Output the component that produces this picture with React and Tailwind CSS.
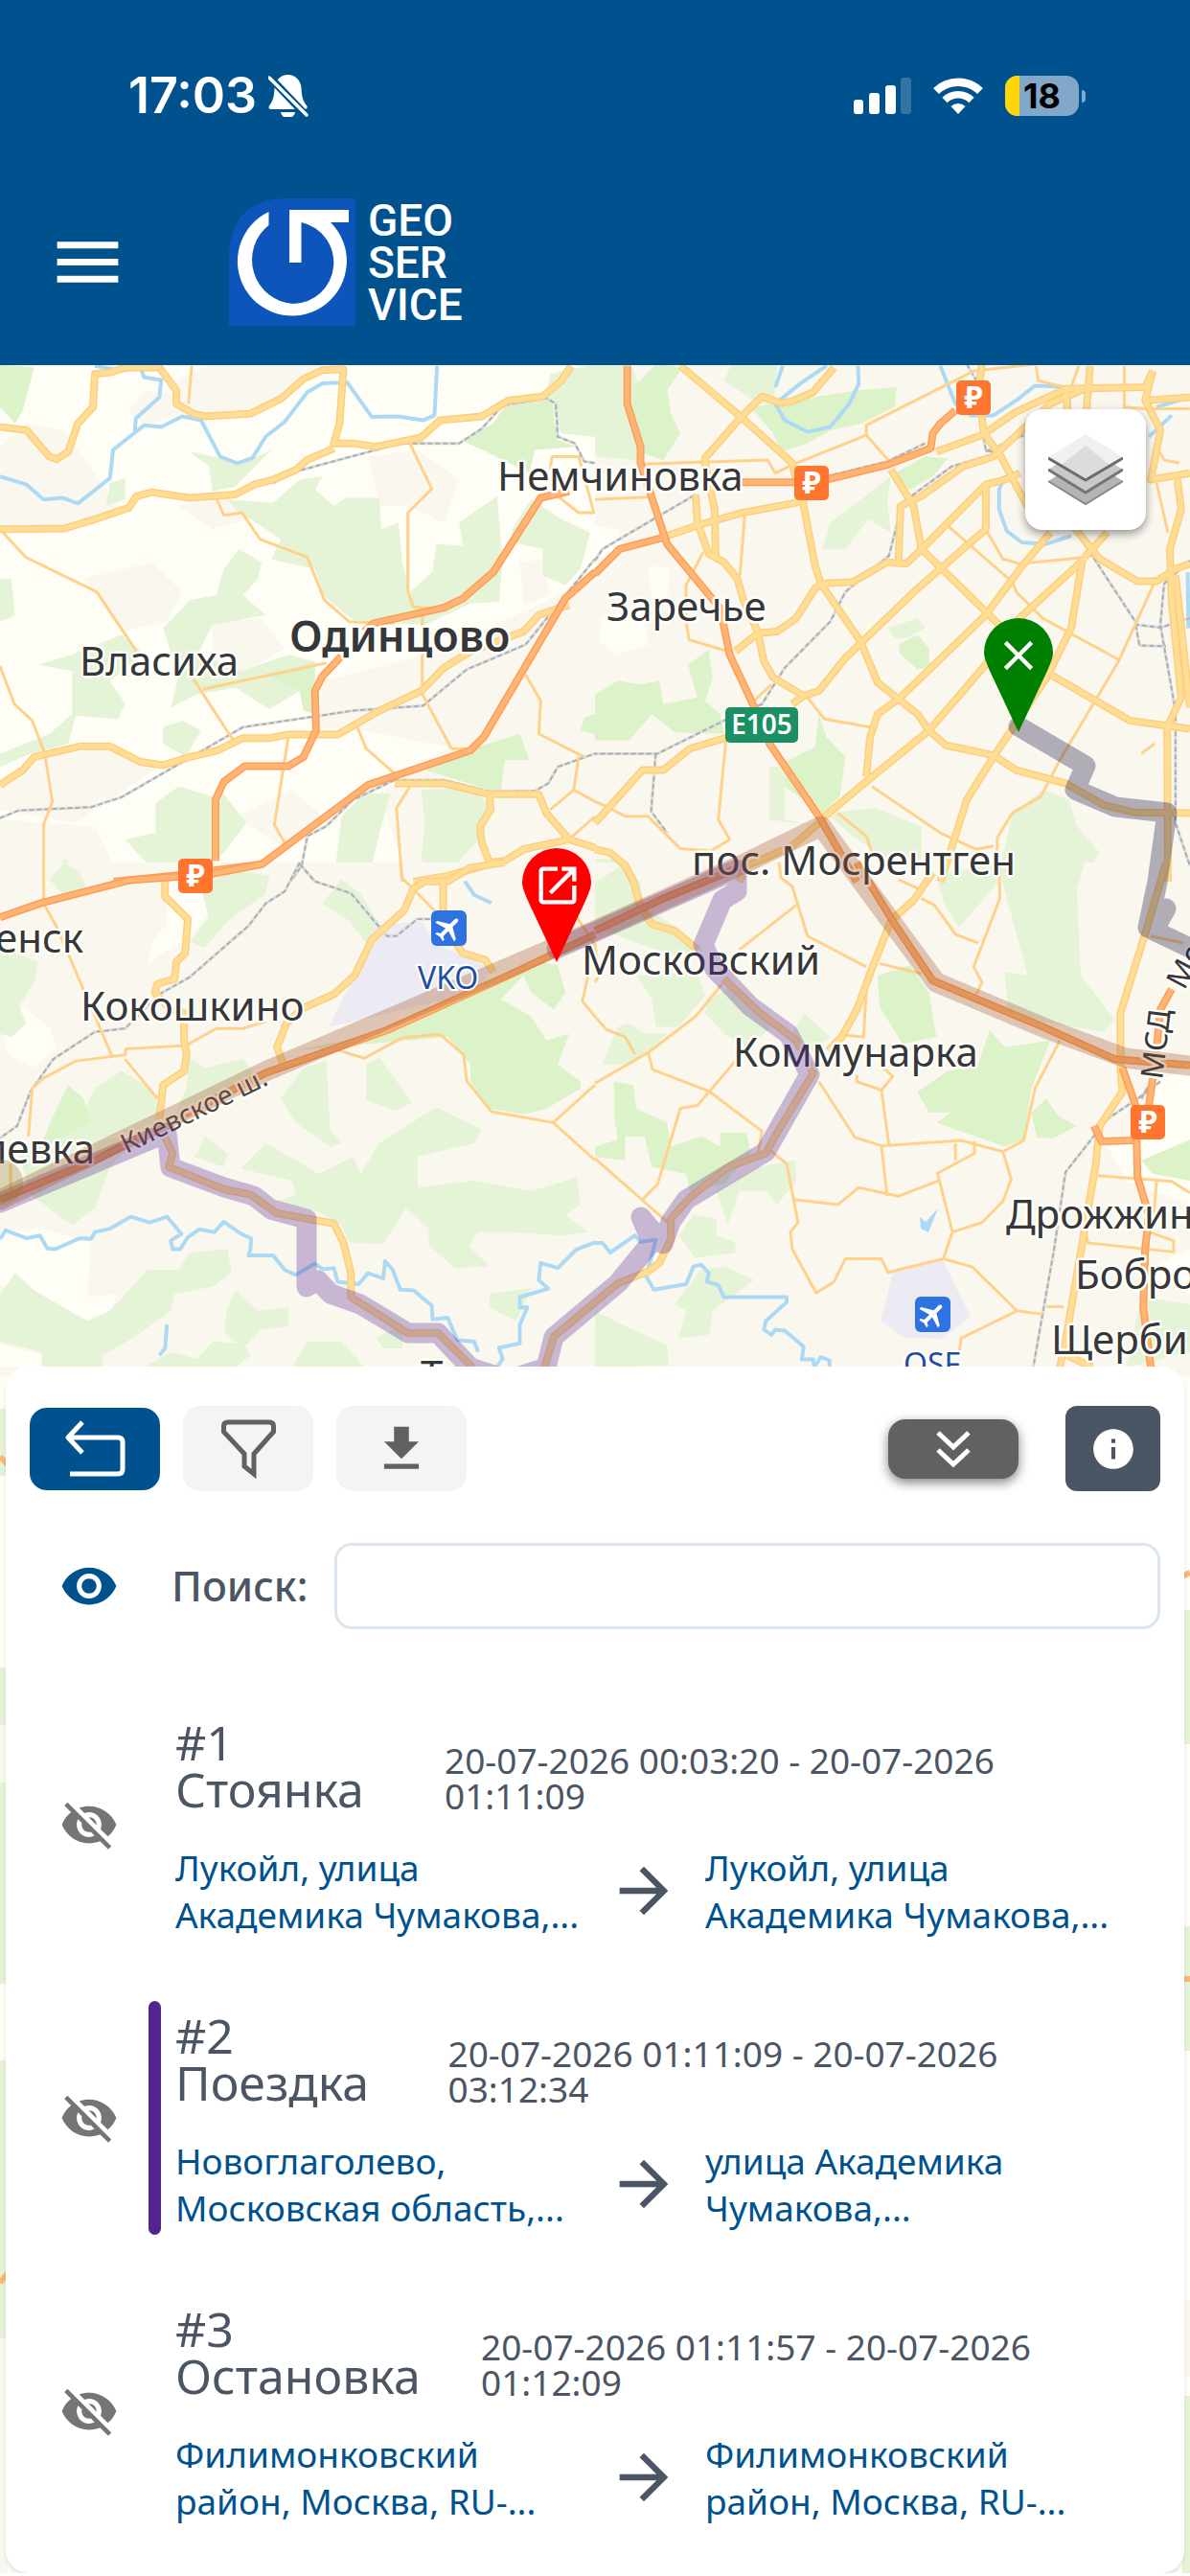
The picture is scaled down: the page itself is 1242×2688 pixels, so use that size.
import {
  MdArrowForward,
  MdClose,
  MdDownload,
  MdInfo,
  MdLocalAirport,
  MdMenu,
  MdOpenInNew,
  MdVisibility,
  MdVisibilityOff,
} from 'react-icons/md';

// Each tile keeps its own coordinate space and is scaled into the map.
const TILES = [
  {
    id: 'nw',
    transform: 'translate(0 380) scale(0.396 0.3444)',
    light: [],
    beige: [
      '0,250 70,180 170,200 230,300 300,420 340,440 200,490 0,490',
      '220,650 400,600 480,690 440,780 320,810',
      '560,780 690,770 750,860 640,940 560,900',
      '460,50 560,0 850,0 800,40 700,150 480,160',
      '970,280 1100,260 1210,350 1170,480 1080,430 1000,430',
      '850,960 1120,880 1400,740 1568,640 1568,1568 1080,1568 1000,1300 1180,1160 960,1110 840,1100',
      '100,1190 300,1160 420,1220 200,1390 0,1350 0,1260',
      '0,1380 250,1400 320,1568 0,1568',
      '470,430 600,400 650,470 560,500',
      '380,80 460,90 480,150 380,185 340,140',
      '620,1370 770,1290 860,1380 740,1460',
      '1370,600 1430,590 1450,700 1380,730',
    ],
    green: [
      '600,410 720,420 790,350 850,340 830,380 880,430 910,405 1000,405 1005,500 1050,480 1060,600 1080,690 1140,630 1150,545 1220,550 1210,480 1310,400 1325,600 1315,720 1240,725 1120,790 930,775 850,700 830,620 750,600 715,590 740,530 620,440',
      '500,265 640,300 715,260 620,370 560,385 550,310',
      '1350,500 1400,410 1480,470 1555,510 1530,620 1490,670 1430,640 1430,560 1350,540',
      '630,560 690,600 680,650 640,700 700,760 560,790 520,880 640,930 760,880 830,900 830,1060 800,1050 790,990 710,1045 620,980 520,1000 450,1040 470,950 430,800 500,715 570,700 590,620',
      '100,910 190,880 320,820 380,880 290,960 330,1030 310,1075 200,1065 180,1150 80,1180 0,1220 0,1180 130,1120 190,1060 190,930',
      '0,650 30,650 40,760 0,780',
      '430,1100 480,1080 530,1110 490,1190 430,1150',
      '410,1330 470,1280 560,1310 580,1290 650,1390 590,1480 500,1568 430,1568 330,1440 410,1420',
      '1110,1290 1240,1280 1300,1350 1270,1430 1160,1568 1110,1500 1120,1390',
      '900,1370 960,1300 1030,1300 1000,1420 970,1568 880,1568',
      '1450,30 1568,0 1568,220 1480,210 1440,100',
      '290,360 330,345 330,410 280,430',
      '120,1568 170,1495 230,1568',
    ],
    park: [
      '0,0 90,10 60,140 40,180 0,130',
      '1300,180 1340,110 1450,100 1470,230 1520,250 1410,260 1395,330 1290,270 1215,230',
      '1230,1170 1370,1120 1395,1200 1330,1200 1320,1300 1120,1230',
      '700,940 830,900 830,1060 800,1050 790,990',
      '1540,1070 1568,1060 1568,1120 1530,1110',
    ],
    water: [
      '0,340 70,365 115,410 165,405 205,422 290,345 298,260 380,185 425,190 480,158 530,170 580,280 625,300 665,285 700,220 750,175 810,85 850,58 915,55 980,160 1050,158 1115,170 1145,155 1152,5',
      '250,5 320,20 370,10 380,40 425,48 420,100 358,165 355,210',
    ],
    minor: [
      '505,5 497,120',
      '570,405 590,458 638,450 685,530 810,585 855,715 920,780 1040,785',
      '1080,240 1138,378 1075,450 1075,690 1090,735 1140,740',
      '0,500 68,585 255,690 360,870',
      '510,955 615,1140',
      '0,915 38,1030 85,1080 118,1180 138,1325 115,1395 115,1568',
      '535,985 860,905',
      '1113,760 1113,1000 1190,1165 1240,1165',
      '760,1130 723,1395 750,1450',
      '942,1100 965,1165 1040,1240',
      '1080,1280 1045,1345 1060,1568',
      '1385,940 1425,1020 1420,1120 1540,1190',
      '1525,1190 1512,1290 1450,1350',
      '1512,1290 1568,1325',
      '1500,1440 1568,1370',
      '1450,320 1455,280 1525,280 1540,340 1565,450 1525,450 1470,400',
    ],
    major: [
      '0,190 70,200 130,280 150,288 180,265 205,180 245,130 250,30 290,25 330,10 420,10 465,80 465,120 510,150 540,158 660,150 740,105 800,45 850,18 905,15 895,180 880,240 930,240 990,250 1110,222 1160,170 1270,158 1340,110 1430,98 1480,50 1505,5',
      '0,500 170,498 250,470 340,435 360,400 400,388 500,405 620,395 670,365 720,350 780,320 810,290 880,255',
      '0,1275 60,1230 90,1190 210,1158 290,1158 370,1205 430,1215 500,1190 570,1172 640,1133 710,1133 760,1122 890,1122 1000,1050 1110,990 1170,920 1240,870 1380,810 1420,760 1500,730',
      '1040,1270 1170,1270 1290,1303 1420,1303 1440,1360 1500,1440 1568,1465',
      '1290,1303 1293,1350 1265,1400 1270,1450 1290,1510 1330,1505 1380,1470 1500,1440',
      '1290,1515 1180,1550 1090,1568',
    ],
    highway: [
      '300,1568 470,1548 690,1515 970,1275 1240,1170 1275,1130 1490,710 1568,630',
      '568,1505 568,1320 590,1265 645,1218 760,1218 800,1190 833,1110 830,990 850,945 900,885',
      '960,810 985,785 1170,738 1220,710 1300,630 1425,405 1500,385',
    ],
    rail: [
      '0,1375 50,1352 240,1342 320,1312 640,1100 930,1050 1115,1035 1230,925 1385,850 1568,590',
      '720,360 780,325 1055,240 1210,240 1270,195 1325,125 1440,103 1465,120 1470,220 1515,240 1540,295 1568,300',
      '1040,1260 1170,1260 1290,1295 1410,1293 1445,1270 1470,1220 1568,1180',
      '1040,1260 930,1320 860,1400 810,1430 795,1520 765,1568',
      '795,1520 830,1568',
    ],
  },
  {
    id: 'ne',
    transform: 'translate(621 380) scale(0.396 0.3444)',
    light: ['0,490 60,500 70,560 0,590', '140,610 195,620 190,700 150,720', '20,760 130,750 140,850 60,880 10,840'],
    beige: ['0,0 1568,0 1568,1568 0,1568'],
    green: [
      '0,0 95,0 115,60 110,290 0,280',
      '360,0 480,0 470,120 430,120 340,50',
      '620,480 690,420 780,340 770,420 780,510 720,470 660,560 600,560',
      '770,800 850,770 870,800 820,830 790,830',
      '460,1220 500,1220 500,1380 590,1400 460,1380',
      '610,1360 740,1345 860,1400 860,1568 770,1500 680,1430',
      '1100,1360 1180,1290 1250,1320 1270,1400 1330,1480 1280,1568 1060,1568',
      '0,1500 60,1500 90,1568 0,1568',
    ],
    park: [
      '110,60 160,0 230,10 190,80 200,150 225,210 180,290 125,270 90,160',
      '410,130 690,80 795,70 790,130 700,180 620,200 560,240 490,265 470,210',
      '790,330 870,280 930,285 890,340 830,380 800,350',
      '245,910 300,865 310,950 290,1020 330,1060 340,1120 210,1115 150,1060 90,1140 0,1140 0,1000 60,960 120,970 170,960 180,1030 270,1010',
      '800,850 850,820 880,860 880,920 850,925 805,880',
      '500,1205 580,1160 590,1060 610,1130 660,1190 645,1310 600,1360 500,1280',
    ],
    water: [
      '910,5 950,120 990,155 1050,155 1110,110 1160,65 1230,68 1250,110 1250,150',
      '1080,340 1065,380 1065,440 1085,505 1125,540 1190,545 1255,520',
      '610,5 540,60 475,120 500,170 560,205 620,190 670,120 695,60 693,5',
      '1460,220 1520,155',
      '1480,130 1568,100',
      '1562,630 1564,800',
      '495,5 475,70',
    ],
    minor: [
      '120,303 455,290 475,330 520,305',
      '530,300 715,215 715,185 1000,20 1160,0',
      '715,215 780,300',
      '0,410 150,402',
      '395,455 382,640',
      '285,570 240,670 240,780 248,835 365,875',
      '930,490 1100,660',
      '1035,510 1075,590 1120,605 1290,585',
      '1100,660 1110,690 1180,770 1260,820 1380,895',
      '1475,660 1380,900 1225,1200 1175,1310 1100,1360 1060,1435 1060,1480',
      '560,1010 605,1075 725,1100',
      '345,1140 325,1380 355,1440 305,1475 225,1468 140,1370 80,1370 30,1340 0,1325',
      '730,1280 910,1420 1005,1470 1050,1460',
      '640,1360 715,1430 730,1480',
      '465,970 420,1020',
      '1480,360 1510,510',
      '1163,5 1168,50 1240,70',
      '1395,5 1395,130 1450,135 1568,135',
      '1275,5 1255,70',
      '1480,250 1500,290 1540,300',
      '1475,1150 1440,1180',
    ],
    major: [
      '225,5 385,160 520,300 530,350',
      '290,300 290,285 385,160 440,98 490,118 520,112 575,85 630,10',
      '290,300 315,440 318,580',
      '190,520 280,485 390,450 530,420 550,400',
      '265,395 270,480 300,575 340,600 375,650 390,710 430,815 445,900 470,950 550,1005 590,990 660,890 850,680 1030,500 1030,360',
      '545,400 580,610 595,665 680,660 770,600 820,605 870,550 1030,365 1080,350 1120,330',
      '595,665 700,840 745,965 800,1015 850,1060 880,1110 925,1155 1050,1185 1110,1230 1240,1270 1340,1335 1420,1358 1568,1360',
      '780,320 840,430 860,560 905,610 1030,750 1110,840 1200,940 1410,1080 1568,1105',
      '370,870 430,815 480,810 530,770 580,680 600,665',
      '800,600 805,430 860,400 970,310 1050,280 1200,120 1300,70',
      '900,265 1020,215 1110,145 1240,75 1450,70 1470,20',
      '1020,0 1010,80 1025,210 1070,280 1125,400 1140,430',
      '1260,490 1330,590 1430,658 1480,658 1530,620 1568,605',
      '1200,510 1120,620 1030,760 800,1015 745,1060 725,1130 715,1250',
      '1290,590 1090,800 1030,910 880,1110 720,1260 590,1385',
      '1285,590 1255,800 1190,950 1050,1190 980,1320 930,1500 910,1568',
      '1350,510 1290,585',
      '1305,5 1295,140',
      '1470,20 1450,110 1490,200 1465,350 1568,330',
      '1450,110 1568,100',
      '1510,1568 1508,1100 1545,1010 1520,720 1515,560 1545,440 1535,350',
      '1568,1040 1530,640',
      '345,1132 250,1165 180,1230 125,1230 0,1390',
      '0,1470 40,1480 80,1520 100,1568',
      '380,1568 400,1520 520,1460 590,1390',
      '520,1030 550,1005',
      '1240,70 1245,140',
    ],
    highway: [
      '85,5 85,120 120,250 120,300 190,545 330,740 355,880 420,1040 460,1150 590,1370 690,1568',
      '0,635 65,560 180,525',
      '375,358 530,358',
      '610,350 770,305 885,255 890,210 910,180 950,140',
    ],
    rail: [
      '0,595 20,560 265,395',
      '610,340 770,295 870,240',
      '980,0 1010,60 1015,160 1030,260 1060,270 1125,395',
      '1270,510 1430,790 1490,798 1568,770',
      '1030,265 1130,215',
      '1060,270 940,310 810,420 775,580 660,690 620,780 500,920 440,1030 340,1080 165,1180 0,1180',
      '160,1180 148,1355 190,1420',
      '1568,595 1500,665 1490,790 1530,1050 1530,1390 1568,1520',
      '1425,790 1435,852 1505,855',
    ],
  },
  {
    id: 'sw',
    transform: 'translate(0 900) scale(0.396 0.3571)',
    light: [
      '440,60 560,30 550,150 500,220 420,270 390,300 400,230 440,180',
      '60,420 0,470 20,560 90,600 150,540 130,480',
      '0,1080 110,1070 240,1110 230,1270 310,1260 290,1310 230,1340 90,1290 0,1230',
      '0,1410 110,1440 110,1475 0,1475',
    ],
    beige: ['0,0 1568,0 1568,1500 0,1500'],
    green: [
      '0,250 100,290 90,350 50,420 70,470 30,510 0,500',
      '530,70 620,20 710,40 700,90 650,130 600,170 540,250 500,230 550,160',
      '850,120 900,50 950,90 1000,180 970,240 920,170',
      '320,610 400,660 430,760 160,840 150,740 210,750 250,660',
      '500,570 540,600 640,575 680,630 560,720 450,770 490,660',
      '50,850 380,790 290,890 250,1010 190,1060 80,970',
      '740,690 800,600 860,580 870,780 900,820 870,830 780,760',
      '965,590 1000,570 1085,700 1045,725 965,695',
      '520,850 540,800 600,850 590,890 510,860',
      '635,895 700,820 780,870 840,910 930,860 950,910 1000,820 1150,715 1270,780 1250,820 1100,860 1100,950 1250,930 1400,960 1520,920 1530,1000 1490,1030 1550,1080 1480,1090 1350,1080 1260,1080 1235,1120 1290,1180 1200,1185 1130,1120 1130,1070 1070,1010 1010,1115 920,1110 900,1060 840,1020 730,990 780,970 770,930',
      '0,1260 40,1200 90,1250 230,1340 290,1310 390,1190 470,1190 500,1140 600,1130 610,1200 560,1240 460,1260 450,1310 350,1390 270,1440 270,1475 110,1475 110,1430 0,1400',
      '600,1300 620,1250 680,1310 760,1300 760,1355 690,1365 640,1420 590,1370',
      '380,1475 450,1430 520,1450 560,1400 640,1405 660,1440 620,1475',
      '770,1475 810,1400 900,1400 960,1475',
      '990,1390 1060,1350 1060,1420 1010,1420',
      '1290,1260 1400,1245 1360,1340 1290,1300',
      '130,50 170,0 210,30 230,80 180,110',
    ],
    park: [
      '140,740 180,650 220,690 240,760 160,800 60,900 110,820',
      '770,550 1050,490 1270,350 1420,290 1470,300 1490,380 1460,430 1400,380 1380,330 1320,400 1400,450 1440,520 1500,500 1470,590 1530,640 1530,660 1440,720 1380,735 1290,720 1240,640 1240,590 1180,510',
    ],
    water: [
      '0,1100 15,1075 70,1098 105,1090 125,1128 145,1130 210,1098 240,1100 250,1080 290,1070 345,1035 395,1052 440,1035 478,1085 450,1105 455,1130 475,1130 495,1095 525,1072 565,1080 590,1050 635,1085 662,1098 660,1130 655,1148 720,1148 750,1190 780,1205 830,1172 850,1188 880,1185 890,1225 945,1232 970,1200 1010,1215 1015,1165 1035,1190 1055,1248 1090,1250 1138,1295 1140,1335 1180,1330 1205,1395 1250,1400 1260,1430',
      '440,1350 435,1420 420,1440',
      '1568,1110 1520,1130 1470,1185 1425,1170 1420,1220 1445,1245 1370,1270 1370,1300 1390,1300 1370,1350 1370,1405 1315,1418 1325,1450 1310,1475',
      '1225,55 1250,95 1295,118',
    ],
    minor: [
      '115,0 115,120 150,190 295,565',
      '75,800 85,660 115,630 200,580 330,562 332,545 490,535 570,485 640,485 700,465',
      '330,575 415,690',
      '890,548 960,572 1060,512 1160,502 1222,562 1230,638 1295,728 1458,760 1568,870',
      '1458,760 1568,650',
      '1055,0 1060,45 1145,140',
      '1520,160 1568,240 1535,405 1568,450',
      '28,880 28,960',
    ],
    major: [
      '435,50 435,100 495,165 488,265 465,290 460,340 415,355 408,380 450,430 485,440 485,520 492,560 485,610 430,650 420,750',
      '1330,0 1240,15 1180,55 1120,55 1090,75 1065,140 980,225 935,330 880,385 800,425 755,470 730,540 745,585',
      '1168,55 1168,180 1220,265 1280,285 1300,320',
      '430,790 455,850 445,890 590,955 660,970 730,1025 880,1055 905,1110 925,1200 925,1270 1075,1375 1155,1375 1245,1475',
      '1435,1475 1460,1385 1568,1285',
    ],
    highway: ['0,160 110,118 340,52 550,35 690,5', '0,985 250,870 700,615 1020,490 1340,330 1568,210'],
    rail: [
      '790,0 750,85 700,120 655,185 500,335 420,385 330,485 250,495 140,575 80,670 45,770 0,805',
      '790,5 830,55 925,90 1020,215 1045,215 1100,165 1140,165',
    ],
  },
  {
    id: 'se',
    transform: 'translate(621 900) scale(0.396 0.3571)',
    light: ['1480,640 1568,600 1568,1000 1400,930 1350,830 1430,820', '1470,1180 1568,1130 1568,1260 1490,1230'],
    beige: ['0,0 1568,0 1568,1500 0,1500'],
    green: [
      '0,60 80,0 120,60 130,130 230,200 290,260 200,270 0,190',
      '110,330 270,320 290,390 220,480 160,480 150,400',
      '300,400 360,360 480,470 400,540 340,500 290,440',
      '20,590 60,480 90,470 130,500 190,500 100,590',
      '900,40 1050,0 1060,60 960,190 920,120',
      '1060,0 1290,0 1270,80 1280,330 1370,460 1340,495 1090,450 1080,320 1140,330',
      '510,520 550,440 620,510 560,560',
      '430,890 530,870 530,930 480,1000 450,960 380,960 350,1060 320,960',
      '220,1090 260,1030 320,1040 320,1090 370,1110 370,1140 265,1155',
      '280,1190 340,1180 420,1220 310,1310 300,1380 220,1390 240,1310 210,1290',
      '0,1310 70,1350 190,1410 195,1470 0,1475',
      '1400,1475 1440,1270 1568,1290 1568,1430',
    ],
    park: [
      '745,330 830,300 880,380 900,510 810,530 750,420',
      '850,670 930,610 1010,590 1040,490 1080,540 1200,520 1150,660 1130,810 1080,830 900,760 940,730 880,730',
      '1150,730 1190,690 1220,740 1270,770 1210,805 1165,805',
      '50,640 100,650 110,720 190,760 200,830 280,800 330,830 330,790 400,790 410,850 340,940 250,960 240,910 150,890 130,800 80,800 80,870 0,860 0,830 60,810 50,740',
      '1440,870 1568,810 1568,930 1470,910',
    ],
    water: [
      '0,1112 20,1112 40,1140 105,1090 120,1108 160,1103 135,1210 155,1248 240,1232 260,1180 280,1175 300,1200 295,1225 325,1235 340,1270 505,1270 505,1285 450,1340 445,1365 465,1380 475,1365 500,1368 550,1415 545,1452 575,1452 578,1475 595,1445 618,1455 618,1475',
    ],
    minor: [
      '0,645 140,555 265,450 335,355',
      '0,450 30,488 80,510 105,560',
      '140,555 152,605 300,668 440,785 430,850',
      '370,580 270,710 225,718 165,940 125,985',
      '0,865 195,1055',
      '485,0 490,45 520,70 560,215 715,305',
      '380,255 530,125',
      '715,370 708,510 660,505',
      '690,620 690,640 755,665 785,625 760,600',
      '590,640 685,803 755,828 965,812 1075,845 1130,812 1160,660 1225,520',
      '755,665 775,828',
      '755,828 770,975',
      '525,985 640,1000 695,950 800,975 905,930',
      '460,840 505,880 535,1052 515,1080 520,1130 583,1258 630,1225 660,1158 755,1158 772,1198 918,1158 942,1080 903,908 1000,850 1000,815',
      '942,1080 1020,1052 1075,990 1097,925 1075,845',
      '918,1158 995,1182 1112,1310 1180,1320',
      '1112,1310 965,1390 960,1430',
      '750,295 860,325',
      '860,105 895,125 950,210 1010,235',
      '800,50 860,80',
      '1065,0 1067,105 998,305 1020,350 1005,385',
      '1325,915 1520,932 1568,965',
      '1480,932 1470,1070',
      '1295,1090 1300,1112 1525,1138 1525,1105 1460,1080',
      '1190,1298 1235,1298',
      '0,240 10,330 0,350',
      '1465,215 1550,235',
      '950,820 950,870',
    ],
    major: [
      '75,0 100,50 120,130 150,180 210,200 270,255',
      '890,30 840,110 780,170 730,310 690,430 650,510 615,550',
      '1505,0 1455,190 1385,440 1385,600 1390,670 1330,770 1320,880 1240,1400 1225,1475',
      '140,1195 170,1170 200,1100 200,1040 250,980 350,890 450,850 480,790 575,615 530,520 430,435 340,340',
      '0,1285 60,1230 140,1195',
      '1245,1440 1310,1475',
    ],
    highway: [
      '0,200 170,110 400,5',
      '690,0 790,180 890,345 1180,480 1370,575 1568,592',
      '1520,370 1490,430 1480,550 1460,710',
      '1390,600 1425,710 1430,920 1460,1030 1450,1130 1445,1300 1465,1475',
      '1315,770 1335,815 1420,812',
    ],
    rail: [
      '1490,640 1430,690 1350,750 1240,905 1210,1130 1155,1475',
      '1440,690 1460,650',
    ],
  },
];

const LABELS = [
  { text: 'Немчиновка', x: 519, y: 512 },
  { text: 'Заречье', x: 633, y: 648 },
  { text: 'Власиха', x: 83, y: 705 },
  { text: 'пос. Мосрентген', x: 722, y: 913 },
  { text: 'Московский', x: 607, y: 1017 },
  { text: 'Коммунарка', x: 765, y: 1113 },
  { text: 'Кокошкино', x: 84, y: 1065 },
  { text: 'енск', x: 87, y: 994, anchor: 'end' },
  { text: 'левка', x: 99, y: 1214, anchor: 'end' },
  { text: 'Дрожжин', x: 1050, y: 1282 },
  { text: 'Бобро', x: 1122, y: 1345 },
  { text: 'Щерби', x: 1097, y: 1413 },
  { text: 'Т', x: 439, y: 1450 },
];

const TOLLS = [
  [998, 397],
  [829, 486],
  [186, 896],
  [1180, 1153],
];

const PURPLE_ROUTE =
  'M0 1255 174 1182 178 1218 234 1239 265 1248 283 1262 320 1272 320 1343 332 1336 345 1350 376 1361 426 1391 457 1391 491 1427 530 1440 570 1427 578 1395 621 1359 645 1339 680 1296 669 1270 692 1298 700 1275 716 1252 799 1202 845 1121 823 1079 783 1050 746 1011 734 986 754 939 769 930 769 907 581 990';
const BROWN_ROUTE = 'M0 1252 277 1118 621 971 779 900 857 862 898 918 977 1025 1096 1075 1175 1104 1242 1112';
const NAVY_ROUTE = 'M1063 758 1133 799 1122 824 1164 842 1218 848 1208 920 1198 968 1217 948 1204 971 1242 989';

const TRIPS = [
  {
    id: 1,
    title: 'Стоянка',
    period: '20-07-2026 00:03:20 - 20-07-2026 01:11:09',
    from: 'Лукойл, улица Академика Чумакова,...',
    to: 'Лукойл, улица Академика Чумакова,...',
  },
  {
    id: 2,
    title: 'Поездка',
    period: '20-07-2026 01:11:09 - 20-07-2026 03:12:34',
    from: 'Новоглаголево, Московская область,...',
    to: 'улица Академика Чумакова,...',
    active: true,
  },
  {
    id: 3,
    title: 'Остановка',
    period: '20-07-2026 01:11:57 - 20-07-2026 01:12:09',
    from: 'Филимонковский район, Москва, RU-...',
    to: 'Филимонковский район, Москва, RU-...',
  },
];

function Lines({ tile, kind, color, width, dash }) {
  return (
    <g fill="none" stroke={color} strokeWidth={width} strokeDasharray={dash} strokeLinejoin="round">
      {tile[kind].map(points => (
        <polyline key={points} points={points} vectorEffect="non-scaling-stroke" />
      ))}
    </g>
  );
}

function Areas({ tile, kind, color }) {
  return (
    <g fill={color}>
      {tile[kind].map(points => <polygon key={points} points={points} />)}
    </g>
  );
}

function Pin({ x, y, color, children }) {
  return (
    <g transform={`translate(${x} ${y})`}>
      <path d="M0 0-30-64C-34-73-36-79-36-83A36 36 0 0 1 36-83C36-79 34-73 30-64Z" fill={color} />
      {children}
    </g>
  );
}

function Airport({ x, y, code, codeX }) {
  return (
    <g>
      <rect x={x} y={y} width="37" height="37" rx="6" fill="#2f72e2" />
      <g transform={`rotate(45 ${x + 18} ${y + 18})`}>
        <MdLocalAirport x={x + 2} y={y + 2} size={33} color="#fff" />
      </g>
      <text x={codeX} y={y + 82} fontSize="32" fill="#1d4ea0" stroke="#fff" strokeWidth="4" paintOrder="stroke">
        {code}
      </text>
    </g>
  );
}

function TripMap() {
  return (
    <svg
      className="absolute inset-0 h-full w-full font-['Noto_Sans',sans-serif]"
      viewBox="0 381 1242 2307"
      preserveAspectRatio="xMidYMin slice"
      role="img"
      aria-label="Карта"
    >
      <rect y="381" width="1242" height="2307" fill="#fffef6" />
      {TILES.map(tile => (
        <g key={tile.id} transform={tile.transform}>
          <Areas tile={tile} kind="beige" color="#faf7ef" />
          <Areas tile={tile} kind="light" color="#fffef6" />
          <Areas tile={tile} kind="green" color="#e5f3d6" />
          <Areas tile={tile} kind="park" color="#dcf2c8" />
        </g>
      ))}
      <path d="M393 965 440 962 455 985 512 1010 500 1035 343 1072 358 1042 370 1015 380 988Z" fill="#ecebf3" />
      <path d="M932 1328 984 1315 1013 1374 983 1397 944 1396 919 1378Z" fill="#ecebf3" />
      <path d="M960 1270 966 1275 979 1261 969 1286 961 1282Z" fill="#acdaf5" />
      {TILES.map(tile => (
        <g key={tile.id} transform={tile.transform}>
          <Lines tile={tile} kind="water" color="#acdaf5" width="4" />
          <Lines tile={tile} kind="rail" color="#dcdcdc" width="3" />
          <Lines tile={tile} kind="rail" color="#aab0b4" width="2" dash="5 3" />
          <Lines tile={tile} kind="minor" color="#ffd28c" width="3" />
        </g>
      ))}
      {TILES.map(tile => (
        <g key={tile.id} transform={tile.transform}>
          <Lines tile={tile} kind="major" color="#fccf7e" width="8" />
          <Lines tile={tile} kind="major" color="#ffdd95" width="5" />
          <Lines tile={tile} kind="highway" color="#ff9c58" width="8" />
          <Lines tile={tile} kind="highway" color="#ffb573" width="5" />
        </g>
      ))}

      {/* Strips that stay visible beside the panel */}
      <path d="M0 1470h8v70H0zM0 1740h8v330H0zM0 2150h8v290H0zM1234 1680h8v140h-8zM1234 2010h8v130h-8zM1234 2500h8v188h-8z" fill="#e5f3d6" />
      <path d="M0 1800h8v60H0zM0 2440h8v248H0zM1234 2400h8v80h-8z" fill="#faf7ef" />
      <path d="M0 1520 8 1528M1234 1645 1242 1641M1234 2065h8M0 2382 8 2372" stroke="#ffb573" strokeWidth="6" />

      <rect x="757" y="738" width="76" height="37" rx="5" fill="#1b9064" />
      <text x="795" y="766" fontSize="28" fontWeight="600" fill="#fff" textAnchor="middle">E105</text>

      <g fontSize="42" fill="#35373b" stroke="#fffef8" strokeWidth="5" strokeLinejoin="round" paintOrder="stroke">
        {LABELS.map(label => (
          <text key={label.text} x={label.x} y={label.y} textAnchor={label.anchor}>{label.text}</text>
        ))}
        <text x="302" y="680" fontSize="45" fontWeight="600">Одинцово</text>
        <text fontSize="28" fill="#4a4642" transform="translate(132 1204) rotate(-26)">Киевское ш.</text>
        <text fontSize="32" transform="translate(1213 1127) rotate(-83)">МСД</text>
        <text fontSize="32" transform="translate(1236 1034) rotate(-62)">Мос</text>
      </g>

      <g fill="none" strokeWidth="21" strokeLinejoin="round" strokeLinecap="round" strokeOpacity="0.3">
        <path d={PURPLE_ROUTE} stroke="#53238f" />
        <path d={BROWN_ROUTE} stroke="#9c4f28" />
        <path d={NAVY_ROUTE} stroke="#060335" />
      </g>
      <circle cx="0" cy="1234" r="24" fill="#8a7a2a" fillOpacity="0.3" />

      {TOLLS.map(([x, y]) => (
        <g key={x}>
          <rect x={x} y={y} width="36" height="36" rx="5" fill="#ff7530" />
          <text x={x + 18} y={y + 29} fontSize="32" fontWeight="700" fill="#fff" textAnchor="middle">₽</text>
        </g>
      ))}

      <Airport x={450} y={950} code="VKO" codeX={436} />
      <Airport x={955} y={1353} code="OSF" codeX={943} />

      <Pin x={581} y={1004} color="#ff0000">
        <MdOpenInNew x={-25} y={-106} size={52} color="#fff" />
      </Pin>
      <Pin x={1063} y={764} color="#008000">
        <MdClose x={-26} y={-106} size={52} color="#fff" />
      </Pin>
    </svg>
  );
}

function StatusBar() {
  return (
    <div className="flex h-[200px] items-center justify-between pr-[109px] pl-[134px] text-white">
      <div className="flex items-center gap-3">
        <span className="font-['Inter',sans-serif] text-[52px] leading-[60px] font-semibold">17:03</span>
        <svg className="h-[44px] w-[42px]" viewBox="0 0 42 44" aria-hidden="true">
          <path d="M20.500 0C28 0 34 6 34.500 14 35 23 36 27 40 32 41.500 34 40.500 36 38 36H3C.5 36-.2 34 1.300 32 5 27 6 23 6.500 14 7 6 13 0 20.500 0ZM13 39h15a7.500 6 0 0 1-15 0Z" fill="#fff" />
          <path d="M-1 0 40 43" stroke="#00528f" strokeWidth="8" />
          <path d="M1 3 40 42" stroke="#fff" strokeWidth="3.500" strokeLinecap="round" />
        </svg>
      </div>
      <div className="flex items-center gap-[23px]">
        <svg className="h-[38px] w-[60px]" viewBox="0 0 60 38" fill="#fff" aria-hidden="true">
          <rect y="23" width="10" height="15" rx="3" />
          <rect x="16" y="16" width="11" height="22" rx="3" />
          <rect x="33" y="8" width="11" height="30" rx="3" />
          <rect x="49" width="11" height="38" rx="3" opacity="0.2" />
        </svg>
        <svg className="h-[38px] w-[52px]" viewBox="0 0 52 38" fill="none" stroke="#fff" aria-hidden="true">
          <path d="M3 14A33 33 0 0 1 49 14" strokeWidth="8.500" />
          <path d="M12 23.500A20 20 0 0 1 40 23.500" strokeWidth="7.500" />
          <path d="M26 38 18.500 30A11 11 0 0 1 33.500 30Z" fill="#fff" stroke="none" />
        </svg>
        <div className="flex items-center gap-[3px]">
          <div className="flex h-[42px] w-[77px] items-center overflow-hidden rounded-[13px] bg-[#82a8c9]">
            <span className="h-full w-[15px] bg-[#ffd60a]" />
            <span className="w-[47px] text-center font-['Inter',sans-serif] text-[36px] leading-[42px] font-bold text-black">18</span>
          </div>
          <span className="h-[13px] w-[4px] rounded-r-full bg-[#82a8c9]" />
        </div>
      </div>
    </div>
  );
}

function Logo() {
  return (
    <a href="#" aria-label="Geoservice" className="flex items-center gap-[13px]">
      <svg className="h-[133px] w-[132px]" viewBox="239 207 132 133" aria-hidden="true">
        <path d="M239 340V270Q239 207 302 207H371V340Z" fill="#0e55bb" />
        <path d="M302 219H364V232H345A57 57 0 1 1 280.500 221V235A46 46 0 0 0 306 317A43 43 0 0 0 314.500 232V274H302Z" fill="#fff" />
      </svg>
      <span className="flex flex-col font-['Roboto',sans-serif] text-[46px] leading-[44px] font-medium text-white">
        <span>GEO</span>
        <span>SER</span>
        <span>VICE</span>
      </span>
    </a>
  );
}

function Header() {
  return (
    <header className="h-[381px] bg-[#00528f]">
      <StatusBar />
      <div className="flex items-center gap-[105px] pt-[7px] pl-[49px]">
        <button type="button" aria-label="Меню" className="text-white">
          <MdMenu size={85} />
        </button>
        <Logo />
      </div>
    </header>
  );
}

function LayersButton() {
  return (
    <button
      type="button"
      aria-label="Слои"
      className="flex size-[126px] items-center justify-center rounded-[18px] bg-white shadow-[0_4px_10px_rgba(0,0,0,0.4)]"
    >
      <svg className="h-[76px] w-[78px]" viewBox="0 0 78 76" aria-hidden="true">
        <path d="M0 50 39 26 78 50 39 75Z" fill="#b5b5b5" />
        <path d="M0 50 39 74 78 50" fill="none" stroke="#8a8a8a" strokeWidth="2" />
        <path d="M0 38 39 14 78 38 39 63Z" fill="#c9c9c9" />
        <path d="M0 38 39 62 78 38" fill="none" stroke="#757575" strokeWidth="3" />
        <path d="M0 25 39 1 78 25 39 50Z" fill="#f0f0f0" />
        <path d="M14 33 39 13 64 33 39 49Z" fill="#dcdcdc" />
        <path d="M0 26 39 49 78 26" fill="none" stroke="#6b6b6b" strokeWidth="3" />
      </svg>
    </button>
  );
}

function Toolbar() {
  return (
    <div className="flex items-center gap-6">
      <button type="button" aria-label="Назад" className="flex h-[86px] w-[136px] items-center justify-center rounded-[18px] bg-[#00528f]">
        <svg className="h-[60px] w-[64px]" viewBox="0 0 64 60" fill="none" stroke="#fff" strokeWidth="5" aria-hidden="true">
          <path d="M19 2 4 18 19 34" strokeLinejoin="round" />
          <path d="M4 18H56Q61 18 61 23V51Q61 56 56 56H6" />
        </svg>
      </button>
      <button type="button" aria-label="Фильтр" className="flex h-[89px] w-[136px] items-center justify-center rounded-[18px] bg-[#f4f4f4]">
        <svg className="h-[62px] w-[57px]" viewBox="0 0 57 62" fill="none" stroke="#616161" strokeWidth="5" aria-hidden="true">
          <path d="M7 3H50Q54.500 3 54.500 7V13L34 36V57L24 49V36L2.500 13V7Q2.500 3 7 3Z" />
        </svg>
      </button>
      <button type="button" aria-label="Скачать" className="flex h-[89px] w-[136px] items-center justify-center rounded-[18px] bg-[#f4f4f4] text-[#616161]">
        <MdDownload size={62} />
      </button>
      <button
        type="button"
        aria-label="Свернуть"
        className="ml-auto flex h-[62px] w-[136px] items-center justify-center rounded-[18px] bg-[#616161] shadow-[0_4px_12px_rgba(0,0,0,0.5)]"
      >
        <svg className="h-[38px] w-[36px]" viewBox="0 0 36 38" fill="none" stroke="#fff" strokeWidth="5" aria-hidden="true">
          <path d="M2 2 18 17 34 2M2 20 18 35 34 20" />
        </svg>
      </button>
      <button type="button" aria-label="Информация" className="ml-[25px] flex h-[89px] w-[99px] items-center justify-center rounded-xl bg-[#4b5563] text-white">
        <MdInfo size={50} />
      </button>
    </div>
  );
}

function Trip({ trip }) {
  return (
    <li className="flex items-stretch">
      <button type="button" aria-label={`Показать #${trip.id}`} className="flex w-[124px] shrink-0 items-center justify-center text-[#757575]">
        <MdVisibilityOff size={62} />
      </button>
      <span className={`w-[13px] shrink-0 rounded-full ${trip.active ? 'bg-[#53238f]' : ''}`} />
      <div className="flex-1 pt-3 pb-1 pl-[15px]">
        <div className="flex items-end gap-[27px] pr-[62px]">
          <h2 className="text-[50px] leading-[49px]">#{trip.id} {trip.title}</h2>
          <p className="text-[37px] leading-[37px]">{trip.period}</p>
        </div>
        <div className="mt-8 grid grid-cols-[1fr_76px_1fr] items-center gap-x-[26px] pr-[50px] text-[37px] leading-[49px]">
          <a href="#" className="text-[#00528f]">{trip.from}</a>
          <MdArrowForward size={76} />
          <a href="#" className="text-[#00528f]">{trip.to}</a>
        </div>
      </div>
    </li>
  );
}

export default function App() {
  return (
    <div className="font-['Noto_Sans',sans-serif] text-[#4b5563]">
      <Header />
      <main className="relative overflow-hidden">
        <TripMap />
        <div className="relative">
          <div className="flex h-[1045px] items-start justify-end p-[46px]">
            <LayersButton />
          </div>
          <section className="mx-[6px] rounded-3xl bg-white px-[25px] pt-[41px] pb-[47px] shadow-md">
            <Toolbar />
            <div className="mt-[54px] flex items-center">
              <button type="button" aria-label="Показать все" className="flex w-[124px] justify-center text-[#00528f]">
                <MdVisibility size={62} />
              </button>
              <label htmlFor="search" className="w-[194px] pl-6 text-[43px] leading-[56px] font-medium">Поиск:</label>
              <input id="search" type="text" className="h-[90px] flex-1 rounded-[18px] border-3 border-[#dbe5ef] px-6 text-[37px]" />
            </div>
            <ul className="mt-[82px] flex flex-col gap-[62px]">
              {TRIPS.map(trip => <Trip key={trip.id} trip={trip} />)}
            </ul>
          </section>
        </div>
      </main>
    </div>
  );
}
